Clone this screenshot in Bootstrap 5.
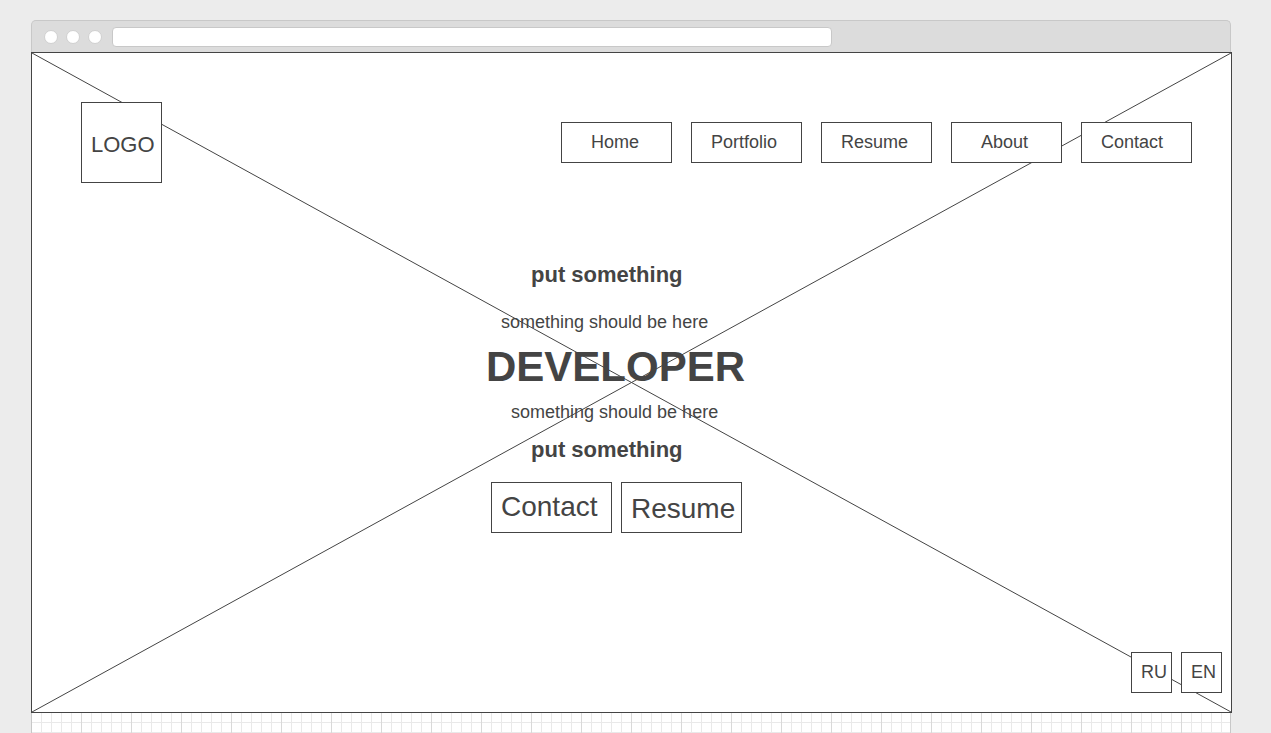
<!DOCTYPE html>
<html lang="en">
<head>
<meta charset="utf-8">
<meta name="viewport" content="width=device-width, initial-scale=1">
<title>Developer wireframe</title>
<link href="https://cdn.jsdelivr.net/npm/bootstrap@5.3.0/dist/css/bootstrap.min.css" rel="stylesheet">
<style>
  :root { --ink: #444; --edge: #c8c8c8; }
  body { background: #ececec; color: var(--ink); font-family: "Liberation Sans", Arial, sans-serif; font-size: 18px; line-height: 22px; }
  .browser { margin: 20px 39px 0 31px; }
  .browser-bar { height: 32px; padding: 0 12px; margin-right: 1px; background: #dcdcdc; border: 1px solid var(--edge); border-bottom: 0; border-radius: 5px 5px 0 0; }
  .dot { width: 14px; height: 14px; background: #fff; border: 1px solid #d0d0d0; border-radius: 50%; }
  .address { width: calc(60% + 16px); height: 20px; margin-left: 2px; padding: 0 8px; border: 1px solid var(--edge); border-radius: 4px; background: #fff; font-size: 12px; line-height: 16px; }
  .canvas { min-height: calc(100vh - 72px); background: #fff; border: 1px solid var(--ink); }
  .cross line { stroke: var(--ink); stroke-width: 1; }
  .site-head { padding: 49px 39px 0 49px; }
  .boxed { display: flex; align-items: center; background: #fff; border: 1px solid var(--ink); border-radius: 0; color: var(--ink); text-decoration: none; padding: 0 0 2px; font-size: 18px; line-height: 22px; white-space: nowrap; }
  .boxed:hover { background: #f4f4f4; color: var(--ink); }
  .logo-box { width: 81px; height: 81px; padding: 4px 0 0 9px; font-size: 22px; line-height: 26px; }
  .nav-box { width: 111px; height: 41px; padding-left: 19px; }
  .nav-box.short-word { padding-left: 29px; }
  .site-nav { gap: 19px; }
  .hero { width: 261px; margin-right: 30px; padding-top: 79px; }
  .hero h2 { font-size: 22px; line-height: 26px; font-weight: 700; padding-left: 45px; margin: 0; }
  .hero h1 { font-size: 42px; line-height: 50px; font-weight: 700; margin: 9px 0; }
  .hero .above { padding-left: 15px; margin: 23px 0 0; }
  .hero .below { padding-left: 25px; margin: 0 0 14px; }
  .cta-row { gap: 9px; margin-top: 19px; padding-left: 5px; }
  .cta { width: 121px; height: 51px; padding-left: 9px; font-size: 28px; line-height: 32px; }
  .cta.low { padding-top: 4px; }
  .lang-row { gap: 9px; padding: 19px 9px; }
  .lang-box { width: 41px; height: 41px; padding-left: 9px; }
  .grid-paper { height: 20px; margin-right: 1px; background-color: #fff; border: solid var(--edge); border-width: 0 1px;
    background-image:
      linear-gradient(to right, #d9d9d9 1px, transparent 1px),
      linear-gradient(to right, #e9e9e9 1px, transparent 1px),
      linear-gradient(to bottom, #e9e9e9 1px, transparent 1px);
    background-size: 50px 50px, 10px 10px, 10px 10px;
    background-position: -1px 0, -1px 0, 0 9px; }
</style>
</head>
<body>
<div class="browser">
  <div class="browser-bar d-flex align-items-center gap-2">
    <span class="dot flex-shrink-0"></span>
    <span class="dot flex-shrink-0"></span>
    <span class="dot flex-shrink-0"></span>
    <input class="address" type="text" aria-label="Address">
  </div>
  <main class="canvas position-relative d-flex flex-column">
    <svg class="cross position-absolute top-0 start-0 w-100 h-100" aria-hidden="true">
      <line x1="0" y1="0" x2="100%" y2="100%"/>
      <line x1="100%" y1="0" x2="0" y2="100%"/>
    </svg>
    <header class="site-head position-relative d-flex justify-content-between align-items-center">
      <a class="boxed logo-box" href="#">LOGO</a>
      <nav class="site-nav d-flex" aria-label="Main">
        <a class="boxed nav-box short-word" href="#">Home</a>
        <a class="boxed nav-box" href="#">Portfolio</a>
        <a class="boxed nav-box" href="#">Resume</a>
        <a class="boxed nav-box short-word" href="#">About</a>
        <a class="boxed nav-box" href="#">Contact</a>
      </nav>
    </header>
    <section class="hero position-relative align-self-center text-nowrap">
      <h2>put something</h2>
      <p class="above">something should be here</p>
      <h1>DEVELOPER</h1>
      <p class="below">something should be here</p>
      <h2>put something</h2>
      <div class="cta-row d-flex">
        <button type="button" class="btn boxed cta">Contact</button>
        <button type="button" class="btn boxed cta low">Resume</button>
      </div>
    </section>
    <div class="lang-row position-relative d-flex justify-content-end mt-auto">
      <button type="button" class="btn boxed lang-box">RU</button>
      <button type="button" class="btn boxed lang-box">EN</button>
    </div>
  </main>
  <div class="grid-paper"></div>
</div>
<script src="https://cdn.jsdelivr.net/npm/bootstrap@5.3.0/dist/js/bootstrap.bundle.min.js"></script>
</body>
</html>
